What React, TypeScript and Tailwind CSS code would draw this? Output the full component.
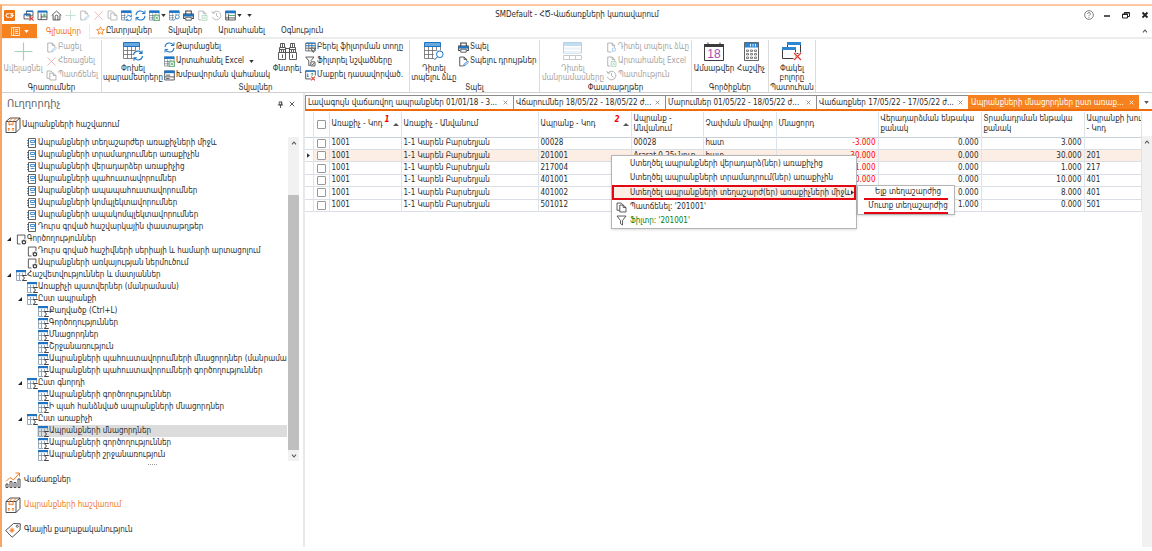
import { useState } from "react";
import type { ReactNode } from "react";
import clsx from "clsx";

type IconProps = { className?: string };

const BLUE = "#1d74c4";
const INK = "#3c3c3c";

function Svg({ className = "size-3", children }: { className?: string; children: ReactNode }) {
  return (
    <svg viewBox="0 0 16 16" fill="none" stroke={INK} strokeWidth="1.2" className={clsx("shrink-0", className)} aria-hidden="true">
      {children}
    </svg>
  );
}

function GridBase() {
  return (
    <>
      <path d="M.7 2v12.5h14V2M.7 8h14M.7 11.3h14M5.3 5v9.5M10 5v9.5" strokeWidth=".9" stroke="#5f6b76" />
      <path d="M.2.5h15v3.8H.2z" fill={BLUE} stroke="none" />
    </>
  );
}

function SumIcon({ className }: IconProps) {
  return (
    <svg viewBox="0 0 11 11" fill="none" stroke="#7d93a8" className={clsx("shrink-0", className)} aria-hidden="true">
      <path d="M.5 2v8.500H5M3.500 3v7M6.500 3v2M9.500 2v2.500M1 5.500h5" strokeWidth=".8" />
      <path d="M0 0h10v2.200H0z" fill={BLUE} stroke="none" />
      <path d="M10.500 6V5.500H6.300L8.500 8l-2.200 2.500h4.200V10" stroke="#2b2b2b" strokeWidth=".9" />
    </svg>
  );
}

function RefreshIcon({ className }: IconProps) {
  return (
    <Svg className={className}>
      <path d="M1.5 7.5a6.500 6.500 0 0 1 12.200-2.700M14.500 8.500a6.500 6.500 0 0 1-12.200 2.700" stroke={BLUE} strokeWidth="1.5" />
      <path d="M14.500.8v4.400h-4.400M1.500 15.200v-4.400h4.400" stroke={BLUE} strokeWidth="1.4" />
    </Svg>
  );
}

function GridRefreshIcon({ className }: IconProps) {
  return (
    <Svg className={className}>
      <GridBase />
      <path d="M6.5 6.5H16V16H6.500z" fill="#fff" stroke="none" />
      <path d="M7.500 11.500a4 4 0 0 1 7.200-2M15.500 12a4 4 0 0 1-7.200 2M15.300 7v2.800h-2.800M7.800 16.200v-2.600h2.800" stroke={BLUE} />
    </Svg>
  );
}

function GridExcelIcon({ className }: IconProps) {
  return (
    <Svg className={className}>
      <GridBase />
      <path d="M7.5 7.5h7.5v8H7.5z" fill="#fff" stroke="#3b9a55" />
      <path d="m9.4 9.4 3.8 4.2m0-4.2-3.8 4.2" stroke="#3b9a55" />
    </Svg>
  );
}

function GridSearchIcon({ className }: IconProps) {
  return (
    <Svg className={className}>
      <GridBase />
      <path d="M7 7h9v9H7z" fill="#fff" stroke="none" />
      <circle cx="12" cy="10" r="2.9" stroke={BLUE} />
      <path d="m10 12.2-3.2 3.3" stroke={BLUE} />
    </Svg>
  );
}

function GridLinesIcon({ className }: IconProps) {
  return (
    <Svg className={className}>
      <path d="M1 2h14v12.5H1zM5 6v8.5M1 11.5h14" />
      <path d="M.4.8h15.2v4H.4z" fill={BLUE} stroke="none" />
      <path d="M5 8h10" stroke="#3b9a55" />
    </Svg>
  );
}

function GroupPanelIcon({ className }: IconProps) {
  return (
    <Svg className={className}>
      <path d="M1 1.5h14v13H1zM1 10h14M3 7.5h6M3 12.5h5" />
      <path d="M.4.8h15.2v3.8H.4z" fill={BLUE} stroke="none" />
    </Svg>
  );
}

function CloseWindowIcon({ className }: IconProps) {
  return (
    <Svg className={className}>
      <path d="M5 1.5h9.5v7H5zM1.5 6h9v7h-9z" fill="#fff" />
      <path d="M5 2h9.5M1.5 6.5h9" stroke={BLUE} strokeWidth="2" />
      <path d="m9.5 9.5 6 6m0-6-6 6" stroke="#e33b32" strokeWidth="1.6" />
    </Svg>
  );
}

function LayoutIcon({ className }: IconProps) {
  return (
    <Svg className={className}>
      <path d="M1.5 2h13v12h-13zM6 5v9M6 10h8" />
      <path d="M1 .8h14v3H1z" fill={BLUE} stroke="none" />
      <path d="M8 7.4h5M10.5 5v5" stroke="#3b9a55" />
    </Svg>
  );
}

function HomeIcon({ className }: IconProps) {
  return (
    <Svg className={className}>
      <path d="m1 8 7-6.5L15 8M3 7v7.5h10V7M6 14.5V9.5a2 2 0 0 1 4 0v5" />
    </Svg>
  );
}

function PlusIcon({ className }: IconProps) {
  return (
    <Svg className={className}>
      <path d="M8 .5v15M.5 8h15" stroke="#3b9a63" strokeWidth="1" />
    </Svg>
  );
}

function CrossIcon({ className }: IconProps) {
  return (
    <Svg className={className}>
      <path d="m2 2 12 12M14 2 2 14" stroke="#e0473e" />
    </Svg>
  );
}

function EditDocIcon({ className }: IconProps) {
  return (
    <Svg className={className}>
      <path d="M7 14.5H2.5v-13H9L12.5 5v2M9 1.500V5h3.500" />
      <path d="m8 14.500 1-3 5-4 1.200 1.600-4.800 4.400z" stroke={BLUE} />
    </Svg>
  );
}

function CopyIcon({ className }: IconProps) {
  return (
    <Svg className={className}>
      <path d="M5 12H1.5V1.5h6L10 4" />
      <path d="M5.5 4.5h5L14.5 8v6.5h-9zM10.5 4.5V8h4" />
    </Svg>
  );
}

function SearchDocIcon({ className }: IconProps) {
  return (
    <Svg className={className}>
      <path d="M7 14.5H2.5v-13H9l3.5 3.5v3M9 1.5V5h3.5" />
      <circle cx="11.5" cy="11" r="2.5" stroke={BLUE} />
      <path d="m9.7 12.8-2.4 2.4" stroke={BLUE} />
    </Svg>
  );
}

function ExcelDocIcon({ className }: IconProps) {
  return (
    <Svg className={className}>
      <path d="M6 14.5H2.5v-13H9l3.5 3.5v2M9 1.5V5h3.5" />
      <path d="M7.5 8h7v7h-7zM9.4 9.6l3.2 3.6m0-3.6-3.2 3.6" stroke="#3b9a55" />
    </Svg>
  );
}

function HistoryIcon({ className }: IconProps) {
  return (
    <Svg className={className}>
      <path d="M3 4.2A6.3 6.3 0 1 1 2 10M1 1.5l1.8 3.4L6.4 4M8 4.5V8.4l3 2" />
    </Svg>
  );
}

function PrinterIcon({ className }: IconProps) {
  return (
    <Svg className={className}>
      <path d="M4 6V1.5h8V6M3 12.5H1V6h14v6.5h-2" strokeWidth="1.5" />
      <path d="M1 6h14v3.5H1z" fill={BLUE} stroke="none" />
      <path d="M4 10.5h8v4.3H4z" fill="#fff" />
    </Svg>
  );
}

function BinocularsIcon({ className }: IconProps) {
  return (
    <svg viewBox="0 0 19 19" fill="none" stroke="#4a4a4a" strokeWidth=".9" className={clsx("shrink-0", className)} aria-hidden="true">
      <path d="M.5 10.5h7v7h-7zM11.5 10.5h7v7h-7zM1.5 10.5v-5h6v5M11.5 10.5v-5h6v5M7.5 6.5h4v4h-4zM2.5 5.5v-4h4v4M12.5 5.5v-4h4v4" />
      <path d="M4.5 1.5v4M14.5 1.5v4M1.5 7.5h6M11.5 7.5h6M4.5 12.5V16M14.5 12.5V16M3.5 8v2M5.5 8v2M13.5 8v2M15.5 8v2" />
    </svg>
  );
}

function FilterRowIcon({ className }: IconProps) {
  return (
    <Svg className={className}>
      <path d="M1 2h14v11H1zM1 9h14M5.5 2v11M10 2v11" strokeWidth="1" />
      <path d="M1 1.5h14M1 5.5h14" stroke={BLUE} strokeWidth="1.6" />
      <path d="M8 9h7.5l-2.7 3.2V15l-2-1v-1.8z" fill="#fff" />
    </Svg>
  );
}

function FilterMarkedIcon({ className }: IconProps) {
  return (
    <Svg className={className}>
      <path d="M1 1.5h12L8.5 7M1 1.5 5.5 7v7l2-1" />
      <path d="M8.5 8.5h6v6h-6zM10 11.5l1.2 1.3 2-2.6" />
    </Svg>
  );
}

function ClearSortIcon({ className }: IconProps) {
  return (
    <Svg className={className}>
      <path d="M9 13H1V1.5h14V8" />
      <path d="M.5 1.5h15" stroke={BLUE} strokeWidth="2" />
      <path d="M4 5v5M2.5 8.5 4 10l1.500-1.500" stroke={BLUE} />
      <path d="M10.500 4.500v4M8.800 6.200l1.700-1.700 1.700 1.700" stroke="#3b9a55" />
      <path d="m9 9.500 5.500 5.500m0-5.500L9 15" stroke="#e33b32" strokeWidth="1.6" />
    </Svg>
  );
}

function FunnelIcon({ className }: IconProps) {
  return (
    <Svg className={className}>
      <path d="M1.5 1.5h13L9.5 8v6.5l-3-2V8z" />
    </Svg>
  );
}

function DocListIcon({ className }: IconProps) {
  return (
    <svg viewBox="0 0 10 10" fill="none" stroke={INK} className={clsx("shrink-0", className)} aria-hidden="true">
      <path d="M1.5.5h7v9h-7z" strokeWidth=".8" />
      <path d="M0 2.5h2M0 5h2M0 7.5h2" strokeWidth=".7" />
      <path d="M3.5 2.5h4v2h-4zM3.5 6.500h4" stroke="#2c86d2" strokeWidth=".9" />
    </svg>
  );
}

function DocGearIcon({ className }: IconProps) {
  return (
    <Svg className={className}>
      <path d="M6.5 14.5H2v-13h11v6" />
      <circle cx="11.5" cy="12" r="2.5" strokeWidth="1.8" />
      <path d="M11.5 8v1.5M8 10l1.3.7M15 10l-1.3.7" />
    </Svg>
  );
}

function BoxIcon({ className }: IconProps) {
  return (
    <Svg className={className}>
      <path d="M1 4.5h10v11H1zM1 4.5 5 1h10l-4 3.5M15 1v10.5l-4 4" strokeWidth=".9" />
      <path d="M4 8V4.5L7.5 1M8 8V4.5L11.5 1M4 8l2-1 2 1M3.8 14v-3m-1 1.200 1-1.200 1 1.200M8 14v-3m-1 1.200L8 11l1 1.200" stroke="#f47b20" strokeWidth="1" />
    </Svg>
  );
}

function SalesIcon({ className }: IconProps) {
  return (
    <Svg className={className}>
      <path d="M1 12h2v3.5H1zM5 9.5h2v6H5zM9 10.5h2v5H9zM13 7h2v8.5h-2z" strokeWidth=".9" />
      <path d="m1 9.5 4-4 3.5 2.5 6-7M10.5 1h4v3.5" stroke="#f47b20" strokeWidth="1" />
    </Svg>
  );
}

function PriceTagIcon({ className }: IconProps) {
  return (
    <Svg className={className}>
      <path d="M.7 8.5 8.5 1.5l6.8.3-.3 6.2-7.800 7.300z" strokeWidth=".9" />
      <circle cx="12.3" cy="4.3" r="1" strokeWidth=".8" />
      <path d="M7 5.5V11M4.5 8.300h5M5.300 6.500l3.400 3.600M8.700 6.500l-3.400 3.600" stroke="#f47b20" strokeWidth=".9" />
    </Svg>
  );
}

function BigTable({ kind }: { kind: "refresh" | "search" | "detail" }) {
  return (
    <svg viewBox="0 0 20 19" className="h-[19px] w-5" fill="none" stroke={INK} aria-hidden="true">
      {kind === "detail" ? (
        <>
          <path d="M.5.5h18V11H.5z" stroke="#5b9bd0" />
          <path d="M1 1h17v3H1z" fill="#7cb4e0" stroke="none" />
          <path d="M1 5.5h17v2H1zM1 9h17v2H1z" fill="#cfe3f3" stroke="none" />
          <path d="M.5 13.5h18v4H.5zM6.5 13.5v4M12.5 13.5v4" stroke="#888" />
        </>
      ) : (
        <>
          <path d="M.5 1v15.5h16V1M.5 8.5h16M.5 12.5h16M4.5 5v11.5M8.5 5v11.5M12.5 5v11.5" strokeWidth=".8" stroke="#666" />
          <path d="M.5.5h16v4H.5z" fill="#68a8dc" stroke={BLUE} />
          <circle cx="15" cy="13.5" r="5.5" fill="#fff" stroke="none" />
        </>
      )}
      {kind === "refresh" && <path d="M10.5 13a4.300 4.300 0 0 1 8-1.800M19.500 14a4.300 4.300 0 0 1-8 1.800M19 8.500v2.900h-2.900M11 18.700v-2.900h2.900" stroke={BLUE} strokeWidth="1.1" />}
      {kind === "search" && (
        <>
          <circle cx="15.8" cy="12.3" r="3.3" stroke={BLUE} />
          <path d="m13.5 14.7-3 3.3" stroke={BLUE} />
        </>
      )}
    </svg>
  );
}

function CalendarIcon() {
  return (
    <svg viewBox="0 0 20 19" className="h-[19px] w-5" fill="none" aria-hidden="true">
      <path d="M.5 2.5h19v16H.5z" stroke={INK} />
      <path d="M0 2h20v3H0z" fill={INK} />
      <path d="M4 .5v2M16 .5v2" stroke={INK} />
      <text x="10" y="16" fontSize="12" textAnchor="middle" fill="#a54bb5" fontFamily="Liberation Sans, sans-serif">18</text>
    </svg>
  );
}

function CalculatorIcon() {
  return (
    <svg viewBox="0 0 15 19" className="h-[19px] w-[15px]" fill="none" stroke={INK} aria-hidden="true">
      <path d="M.5.5h14v18H.5z" strokeWidth=".8" />
      <path d="M1 1h13v4.5H1z" fill="#2c86d2" stroke="none" />
      <path d="M6.5 2v2.5M9 2v2.5M11.5 2v2.5" stroke="#fff" strokeWidth=".9" />
      <path d="M2.5 8h2v1.5h-2zM6.5 8h2v1.5h-2zM10.5 8h2v1.5h-2zM2.5 11.5h2V13h-2zM6.5 11.5h2V13h-2zM10.5 11.5h2V13h-2zM2.5 15h2v1.5h-2zM6.5 15h2v1.5h-2zM10.5 15h2v1.5h-2z" strokeWidth=".6" />
    </svg>
  );
}

function CloseAllIcon() {
  return (
    <svg viewBox="0 0 20 19" className="h-[19px] w-5" fill="none" stroke={INK} aria-hidden="true">
      <path d="M5.5.5h13v11h-13z" fill="#fff" />
      <path d="M5 0h14v3H5z" fill="#2c86d2" stroke="none" />
      <path d="M.5 5.5h13v11H.5z" fill="#fff" />
      <path d="M0 5h14v3H0z" fill="#2c86d2" stroke="none" />
      <path d="m12 11 7 7m0-7-7 7" stroke="#fff" strokeWidth="3" />
      <path d="m12 11 7 7m0-7-7 7" stroke="#e33b32" strokeWidth="1.2" />
    </svg>
  );
}

function Caret({ className = "text-[#333]" }: IconProps) {
  return (
    <svg viewBox="0 0 6 4" className={clsx("h-[3px] w-[5px] shrink-0", className)} fill="currentColor" aria-hidden="true">
      <path d="M0 0h6L3 4z" />
    </svg>
  );
}

function Chevron({ down = false }: { down?: boolean }) {
  return (
    <svg viewBox="0 0 8 6" className="h-1 w-[6px]" fill="none" stroke="#555" strokeWidth="1.6" aria-hidden="true">
      <path d={down ? "m1 1 3 3.5L7 1" : "m1 5 3-3.5L7 5"} />
    </svg>
  );
}

type QuickItem = { label: string; icon: (p: IconProps) => ReactNode; off?: boolean; caret?: boolean };

const quickItems: QuickItem[] = [
  { label: "Փակել", icon: CloseWindowIcon },
  { label: "Պատուհան", icon: LayoutIcon },
  { label: "Գլխավոր", icon: HomeIcon },
  { label: "Ավելացնել", icon: PlusIcon, off: true },
  { label: "Բացել", icon: EditDocIcon, off: true },
  { label: "Հեռացնել", icon: CrossIcon, off: true },
  { label: "Պատճենել", icon: CopyIcon, off: true },
  { label: "Փոխել պարամետրերը", icon: GridRefreshIcon },
  { label: "Թարմացնել", icon: RefreshIcon },
  { label: "Արտահանել Excel", icon: GridExcelIcon, caret: true },
  { label: "Դիտել տպելու ձևը", icon: GridSearchIcon },
  { label: "Տպել", icon: PrinterIcon },
  { label: "Արտահանել փաստաթուղթը", icon: ExcelDocIcon, off: true },
  { label: "Պատմություն", icon: HistoryIcon, off: true },
  { label: "Աղյուսակ", icon: GridLinesIcon, caret: true },
];

function TitleBar() {
  return (
    <header className="relative flex h-[18px] items-center pl-[2px]">
      <svg viewBox="0 0 12 12" className="mr-2 size-[11px]" aria-hidden="true">
        <rect width="12" height="12" rx="1" fill="#ee7412" />
        <path d="M5.5 4h-2L2 6l1.5 2h2M6 4h3.5L8 6h2L8.5 8H6" fill="none" stroke="#fff" strokeWidth="1.1" />
      </svg>
      <div className="flex items-center gap-[3px]">
        {quickItems.map(({ label, icon: Icon, off, caret }) => (
          <button key={label} aria-label={label} disabled={off} className={clsx("flex items-center gap-px", off && "opacity-40")}>
            <Icon className="size-[11px]" />
            {caret && <Caret />}
          </button>
        ))}
        <button aria-label="Ավելին" className="ml-[2px]"><Caret /></button>
      </div>
      <h1 className="pointer-events-none absolute inset-x-0 text-center">SMDefault - ՀԾ-Վաճառքների կառավարում</h1>
      <div className="relative ml-auto flex items-center gap-[9px] pr-[3px] text-[#222]">
        <button aria-label="Օգնություն">
          <svg viewBox="0 0 16 16" className="size-[10px]" fill="none" stroke="#555" strokeWidth="1.2" aria-hidden="true">
            <circle cx="8" cy="8" r="7" />
            <path d="M5.8 6.2a2.200 2.200 0 1 1 3.200 2Q8 8.800 8 10M8 11.300v1.400" />
          </svg>
        </button>
        <button aria-label="Ծալել">
          <svg viewBox="0 0 8 8" className="size-2" stroke="currentColor" strokeWidth="1.5" aria-hidden="true"><path d="M1 5h6" /></svg>
        </button>
        <button aria-label="Վերականգնել" className="ml-[2px]">
          <svg viewBox="0 0 8 8" className="size-2" fill="none" stroke="currentColor" aria-hidden="true"><path d="M2.5 3V1.5h5v4H6M.5 3h5v4h-5zM2 2h5M1 3.5h4.5" /></svg>
        </button>
        <button aria-label="Փակել ծրագիրը" className="ml-[2px]">
          <svg viewBox="0 0 8 8" className="size-2" stroke="currentColor" strokeWidth="1.8" aria-hidden="true"><path d="m1.5 1.5 5 5m0-5-5 5" /></svg>
        </button>
      </div>
    </header>
  );
}

function RibbonTabs() {
  return (
    <nav className="flex h-[15px] items-stretch border-b-2 border-[#ececec]">
      <button aria-label="Ֆայլ" className="-mb-px flex w-[35px] items-center justify-center gap-1 bg-[#f5821f] text-white">
        <svg viewBox="0 0 10 10" className="size-[9px]" fill="none" stroke="currentColor" aria-hidden="true">
          <path d="M.5.5h9v9h-9zM3 .5v9M4.5 3H8M4.5 5H8M4.5 7H8" strokeWidth=".9" />
        </svg>
        <Caret className="text-white" />
      </button>
      <button className="-mb-[2px] ml-px w-[52px] border-r border-[#ececec] bg-white text-center text-[#ee6f10]">Գլխավոր</button>
      <button className="ml-[6px] flex items-center gap-px">
        <svg viewBox="0 0 12 12" className="size-[9px]" fill="#fff3e3" stroke="#f07a1a" aria-hidden="true">
          <path d="m6 1 1.5 3.4 3.7.4-2.8 2.5.8 3.7L6 9.1 2.8 11l.8-3.7L.8 4.800l3.700-.4z" />
        </svg>
        Ընտրյալներ
      </button>
      <button className="ml-4">Տվյալներ</button>
      <button className="ml-4">Արտահանել</button>
      <button className="ml-4">Օգնություն</button>
      <button aria-label="Ծալել ժապավենը" className="ml-auto mr-1"><Chevron /></button>
    </nav>
  );
}

function RibbonGroup({ title, className, children }: { title: string; className: string; children: ReactNode }) {
  return (
    <section className={clsx("flex shrink-0 flex-col border-r border-[#dcdcdc]", className)}>
      <div className="flex h-[43px]">{children}</div>
      <h2 className="text-center leading-[9px]">{title}</h2>
    </section>
  );
}

function BigButton({ lines, icon, off, className }: { lines: string[]; icon: ReactNode; off?: boolean; className?: string }) {
  return (
    <button disabled={off} className={clsx("flex shrink-0 flex-col items-center pt-[2px]", off && "opacity-45", className)}>
      {icon}
      <span className="mt-[3px] flex flex-col items-center whitespace-nowrap leading-[9px]">
        {lines.map((line) => <span key={line}>{line}</span>)}
      </span>
    </button>
  );
}

function SmallButton({ label, icon: Icon, off, caret }: QuickItem) {
  return (
    <button disabled={off} className={clsx("flex h-[14px] items-center gap-px whitespace-nowrap", off && "opacity-45")}>
      <Icon className="size-[11px]" />
      {label}
      {caret && <Caret className="ml-1 text-[#333]" />}
    </button>
  );
}

function Ribbon() {
  return (
    <div className="flex h-[54px] border-b border-[#d0d0d0] pt-px">
      <RibbonGroup title="Գրառումներ" className="w-[100px]">
        <BigButton lines={["Ավելացնել"]} off icon={<PlusIcon className="size-[19px]" />} className="w-[42px]" />
        <div className="ml-[2px] flex flex-col">
          <SmallButton label="Բացել" icon={EditDocIcon} off />
          <SmallButton label="Հեռացնել" icon={CrossIcon} off />
          <SmallButton label="Պատճենել" icon={CopyIcon} off />
        </div>
      </RibbonGroup>
      <RibbonGroup title="Տվյալներ" className="w-[308px]">
        <BigButton lines={["Փոխել", "պարամետրերը"]} icon={<BigTable kind="refresh" />} className="w-[62px]" />
        <div className="flex w-[107px] flex-col">
          <SmallButton label="Թարմացնել" icon={RefreshIcon} />
          <SmallButton label="Արտահանել Excel" icon={GridExcelIcon} caret />
          <SmallButton label="Խմբավորման վահանակ" icon={GroupPanelIcon} />
        </div>
        <BigButton lines={["Փնտրել"]} icon={<BinocularsIcon className="size-[19px]" />} className="w-[32px]" />
        <div className="ml-[2px] flex flex-col">
          <SmallButton label="Բերել ֆիլտրման տողը" icon={FilterRowIcon} />
          <SmallButton label="Ֆիլտրել նշվածները" icon={FilterMarkedIcon} />
          <SmallButton label="Մաքրել դասավորված." icon={ClearSortIcon} />
        </div>
      </RibbonGroup>
      <RibbonGroup title="Տպել" className="w-[130px]">
        <BigButton lines={["Դիտել", "տպելու ձևը"]} icon={<BigTable kind="search" />} className="w-[48px]" />
        <div className="flex flex-col">
          <SmallButton label="Տպել" icon={PrinterIcon} />
          <SmallButton label="Տպելու դրույթներ" icon={EditDocIcon} />
        </div>
      </RibbonGroup>
      <RibbonGroup title="Փաստաթղթեր" className="w-[152px]">
        <BigButton lines={["Դիտել", "մանրամասները"]} off icon={<BigTable kind="detail" />} className="w-[66px]" />
        <div className="flex flex-col">
          <SmallButton label="Դիտել տպելու ձևը" icon={SearchDocIcon} off />
          <SmallButton label="Արտահանել Excel" icon={ExcelDocIcon} off />
          <SmallButton label="Պատմություն" icon={HistoryIcon} off />
        </div>
      </RibbonGroup>
      <RibbonGroup title="Գործիքներ" className="w-[77px]">
        <BigButton lines={["Ամսաթվեր"]} icon={<CalendarIcon />} className="w-[44px]" />
        <BigButton lines={["Հաշվիչ"]} icon={<CalculatorIcon />} className="w-[30px]" />
      </RibbonGroup>
      <RibbonGroup title="Պատուհան" className="w-[47px]">
        <BigButton lines={["Փակել", "բոլորը"]} icon={<CloseAllIcon />} className="w-[46px]" />
      </RibbonGroup>
    </div>
  );
}

type TreeItem = { label: string; depth: 0 | 1 | 2; kind: "doc" | "gear" | "sum"; open?: boolean };

const treeItems: TreeItem[] = [
  { label: "Ապրանքների տեղաշարժեր առաքիչների միջև", depth: 1, kind: "doc" },
  { label: "Ապրանքների տրամադրումներ առաքիչին", depth: 1, kind: "doc" },
  { label: "Ապրանքների վերադարձեր առաքիչից", depth: 1, kind: "doc" },
  { label: "Ապրանքների պահուստավորումներ", depth: 1, kind: "doc" },
  { label: "Ապրանքների ապապահուստավորումներ", depth: 1, kind: "doc" },
  { label: "Ապրանքների կոմպլեկտավորումներ", depth: 1, kind: "doc" },
  { label: "Ապրանքների ապակոմպլեկտավորումներ", depth: 1, kind: "doc" },
  { label: "Դուրս գրված հաշվարկային փաստաթղթեր", depth: 1, kind: "doc" },
  { label: "Գործողություններ", depth: 0, kind: "gear", open: true },
  { label: "Դուրս գրված հաշիվների սերիայի և համարի արտացոլում", depth: 1, kind: "gear" },
  { label: "Ապրանքների առկայության ներմուծում", depth: 1, kind: "gear" },
  { label: "Հաշվետվություններ և մատյաններ", depth: 0, kind: "sum", open: true },
  { label: "Առաքիչի պատվերներ (մանրամասն)", depth: 1, kind: "sum" },
  { label: "Ըստ ապրանքի", depth: 1, kind: "sum", open: true },
  { label: "Քաղվածք (Ctrl+L)", depth: 2, kind: "sum" },
  { label: "Գործողություններ", depth: 2, kind: "sum" },
  { label: "Մնացորդներ", depth: 2, kind: "sum" },
  { label: "Շրջանառություն", depth: 2, kind: "sum" },
  { label: "Ապրանքների պահուստավորումների մնացորդներ (մանրամասն)", depth: 2, kind: "sum" },
  { label: "Ապրանքների պահուստավորումների գործողություններ", depth: 2, kind: "sum" },
  { label: "Ըստ գնորդի", depth: 1, kind: "sum", open: true },
  { label: "Ապրանքների գործողություններ", depth: 2, kind: "sum" },
  { label: "Ի պահ հանձնված ապրանքների մնացորդներ", depth: 2, kind: "sum" },
  { label: "Ըստ առաքիչի", depth: 1, kind: "sum", open: true },
  { label: "Ապրանքների մնացորդներ", depth: 2, kind: "sum" },
  { label: "Ապրանքների գործողություններ", depth: 2, kind: "sum" },
  { label: "Ապրանքների շրջանառություն", depth: 2, kind: "sum" },
];

const treeIcons = { doc: DocListIcon, gear: DocGearIcon, sum: SumIcon };
const treeIconSizes = { doc: "size-[10px]", gear: "size-[11px]", sum: "size-[11px]" };
const indents = ["pl-1", "pl-[15px]", "pl-[26px]"];

function Tree() {
  const [selected, setSelected] = useState(24);
  return (
    <div className="mt-[2px] flex h-[324px] pr-1">
      <ul className="min-w-0 flex-1 overflow-hidden">
        {treeItems.map((item, i) => {
          const Icon = treeIcons[item.kind];
          return (
            <li key={i} className={clsx("flex", indents[item.depth])}>
              <span className="flex w-[9px] shrink-0 items-center pl-px">
                {item.open && <svg viewBox="0 0 5 5" className="size-1" fill="#222" aria-hidden="true"><path d="M5 0v5H0z" /></svg>}
              </span>
              <button
                onClick={() => setSelected(i)}
                className={clsx("flex h-3 min-w-0 flex-1 items-center overflow-hidden whitespace-nowrap leading-3", selected === i && "bg-[#dcdcdc]")}
              >
                <span className="flex w-3 shrink-0 justify-center"><Icon className={treeIconSizes[item.kind]} /></span>
                {item.label}
              </button>
            </li>
          );
        })}
      </ul>
      <div className="ml-px flex w-[11px] flex-col items-center bg-[#f1f1f1]">
        <span className="flex h-3 items-center"><Chevron /></span>
        <span className="mt-[46px] w-full flex-1 bg-[#bfbfbf]" />
        <span className="flex h-[11px] items-center"><Chevron down /></span>
      </div>
    </div>
  );
}

const modules = [
  { label: "Վաճառքներ", icon: SalesIcon },
  { label: "Ապրանքների հաշվառում", icon: BoxIcon, active: true },
  { label: "Գնային քաղաքականություն", icon: PriceTagIcon },
];

function Sidebar() {
  return (
    <aside className="flex w-[301px] shrink-0 flex-col">
      <div className="flex h-[22px] items-center pl-[5px] pr-1">
        <h2 className="flex-1 text-[11px] text-[#666]">Ուղղորդիչ</h2>
        <button aria-label="Ամրացնել" className="mr-[5px]">
          <svg viewBox="0 0 8 8" className="size-[7px]" fill="none" stroke="#444" aria-hidden="true"><path d="M2.5 1h3v3.5h-3zM1 4.5h6M4 4.5V8M5 1v3" /></svg>
        </button>
        <button aria-label="Փակել ուղղորդիչը" className="mr-[4px]">
          <svg viewBox="0 0 8 8" className="size-[6px]" stroke="#444" strokeWidth="1.2" aria-hidden="true"><path d="m1 1 6 6m0-6-6 6" /></svg>
        </button>
      </div>
      <h3 className="flex h-5 items-center gap-px pl-[3px]">
        <BoxIcon className="size-4" />
        Ապրանքների հաշվառում
      </h3>
      <Tree />
      <div className="flex h-[6px] items-center justify-center gap-px">
        {[0, 1, 2, 3, 4].map((n) => <span key={n} className="size-px bg-[#999]" />)}
      </div>
      <ul>
        {modules.map(({ label, icon: Icon, active }) => (
          <li key={label}>
            <button className={clsx("flex h-[25px] items-center gap-[3px] pl-[3px]", active && "text-[#f07a1a]")}>
              <Icon className="size-4" />
              {label}
            </button>
          </li>
        ))}
      </ul>
    </aside>
  );
}

const docTabs = [
  { label: "Լավագույն վաճառվող ապրանքներ 01/01/18 - 3...", width: "basis-[208px]" },
  { label: "Վճարումներ 18/05/22 - 18/05/22 ժ...", width: "basis-[152px]" },
  { label: "Մարումներ 01/05/22 - 18/05/22 ժ...", width: "basis-[151px]" },
  { label: "Վաճառքներ 17/05/22 - 17/05/22 ժ...", width: "basis-[152px]" },
  { label: "Ապրանքների մնացորդներ ըստ առաք...", width: "basis-[171px]", active: true },
];

function DocTabs() {
  return (
    <div className="box-content flex h-[14px] border-b-2 border-[#ee6a0a]">
      {docTabs.map(({ label, width, active }) => (
        <div
          key={label}
          className={clsx("flex min-w-0 items-center justify-between border-l border-t pl-[2px] pr-[5px]", width, active ? "border-[#f5821f] bg-[#f5821f] text-white" : "border-[#8c8c8c]")}
        >
          <button className="min-w-0 overflow-hidden whitespace-nowrap">{label}</button>
          <button aria-label={`Փակել ${label}`} className={active ? "text-white" : "text-[#777]"}>
            <svg viewBox="0 0 8 8" className="size-[5px]" stroke="currentColor" strokeWidth="1.2" aria-hidden="true"><path d="m1 1 6 6m0-6-6 6" /></svg>
          </button>
        </div>
      ))}
      <button aria-label="Բոլոր պատուհանները" className="ml-auto px-[3px]"><Caret className="text-[#555]" /></button>
    </div>
  );
}

const rows = [
  ["1001", "1-1 Կարեն Բարսեղյան", "00028", "00028", "հատ", "-3.000", "0.000", "3.000", ""],
  ["1001", "1-1 Կարեն Բարսեղյան", "201001", "Ararat 0.25լ նուռ", "հատ", "-30.000", "0.000", "30.000", "201"],
  ["1001", "1-1 Կարեն Բարսեղյան", "217004", "", "", "-1.000", "0.000", "1.000", "217"],
  ["1001", "1-1 Կարեն Բարսեղյան", "401001", "", "", "-10.000", "0.000", "10.000", "401"],
  ["1001", "1-1 Կարեն Բարսեղյան", "401002", "", "", "", "0.000", "8.000", "401"],
  ["1001", "1-1 Կարեն Բարսեղյան", "501012", "", "", "", "1.000", "0.000", "501"],
];

const columns = [
  { lines: ["Առաքիչ - Կոդ"], width: "w-[72px]", sort: 1 },
  { lines: ["Առաքիչ - Անվանում"], width: "w-[137px]" },
  { lines: ["Ապրանք - Կոդ"], width: "w-[93px]", sort: 2 },
  { lines: ["Ապրանք -", "Անվանում"], width: "w-[72px]" },
  { lines: ["Չափման միավոր"], width: "w-[73px]" },
  { lines: ["Մնացորդ"], width: "w-[102px]" },
  { lines: ["Վերադարձման ենթակա", "քանակ"], width: "w-[103px]" },
  { lines: ["Տրամադրման ենթակա", "քանակ"], width: "w-[103px]" },
  { lines: ["Ապրանքի խու", "- Կոդ"], width: "" },
];

const checkbox = "block size-[9px] appearance-none rounded-[1px] border border-[#999] bg-white checked:bg-[#f5821f]";

function StockTable() {
  return (
    <div className="mt-px flex flex-1 items-stretch">
      <div className="min-w-0 flex-1">
        <table className="h-[100px] w-full table-fixed border-collapse text-left">
          <thead>
            <tr className="h-[25px] border-b border-[#c9d0d8]">
              <th className="w-2 border-r border-[#dde3ea]" aria-label="Ընթացիկ" />
              <th className="w-4 border-r border-[#dde3ea] pl-[3px]"><input type="checkbox" aria-label="Նշել բոլորը" className={checkbox} /></th>
              {columns.map(({ lines, width, sort }) => (
                <th key={lines.join(" ")} className={clsx("overflow-hidden whitespace-nowrap border-r border-[#dde3ea] pl-[2px] font-normal leading-[10px]", width)}>
                  <span className="flex items-center justify-between pr-[2px]">
                    <span>{lines.map((line) => <span key={line} className="block">{line}</span>)}</span>
                    {sort && (
                      <span className="flex items-center gap-[3px]">
                        <b className="pb-2 italic text-[#ff0000]">{sort}</b>
                        <svg viewBox="0 0 6 3" className="h-[3px] w-[6px]" fill="#555" aria-hidden="true"><path d="M3 0l3 3H0z" /></svg>
                      </span>
                    )}
                  </span>
                </th>
              ))}
            </tr>
          </thead>
          <tbody>
            {rows.map((row, r) => (
              <tr key={r} className={clsx("h-3 border-b border-[#dadfe5]", r === 1 && "bg-[#fceee4]")}>
                <td className="border-r border-[#dde3ea] bg-white">
                  {r === 1 && <svg viewBox="0 0 4 6" className="ml-[2px] h-[5px] w-[3px]" fill="#333" aria-hidden="true"><path d="M0 0l4 3-4 3z" /></svg>}
                </td>
                <td className="border-r border-[#dde3ea] pl-[3px]"><input type="checkbox" aria-label={`Նշել ${row[2]}`} className={checkbox} /></td>
                {row.map((cell, c) => (
                  <td
                    key={c}
                    className={clsx(
                      "overflow-hidden whitespace-nowrap border-r border-[#dde3ea] px-[2px] leading-[10px]",
                      c >= 5 && c <= 7 && "text-right",
                      c === 5 && "text-[#ff0000]"
                    )}
                  >
                    {cell}
                  </td>
                ))}
              </tr>
            ))}
          </tbody>
        </table>
      </div>
      <div className="mt-6 flex w-[10px] justify-center bg-[#f1f1f1] pt-1"><Chevron /></div>
    </div>
  );
}

function ContextMenu() {
  return (
    <div className="absolute left-[306px] top-[62px] flex items-start">
      <ul className="w-[246px] border border-[#b5b5b5] bg-white py-px shadow-sm">
        <li><button className="flex h-[14px] w-full items-center pl-[18px]">Ստեղծել ապրանքների վերադարձ(ներ) առաքիչից</button></li>
        <li><button className="flex h-[14px] w-full items-center pl-[18px]">Ստեղծել ապրանքների տրամադրում(ներ) առաքիչին</button></li>
        <li>
          <button className="flex h-[15px] w-full items-center justify-between whitespace-nowrap border-2 border-[#e30613] bg-[#fceee4] pl-4 leading-[10px]">
            Ստեղծել ապրանքների տեղաշարժ(եր) առաքիչների միջև
            <svg viewBox="0 0 4 6" className="h-[5px] w-[3px] shrink-0" fill="#333" aria-hidden="true"><path d="M0 0l4 3-4 3z" /></svg>
          </button>
        </li>
        <li><button className="flex h-[14px] w-full items-center gap-[3px] pl-1"><CopyIcon className="size-[11px]" />Պատճենել: '201001'</button></li>
        <li><button className="flex h-[13px] w-full items-center gap-[3px] pl-1 text-[#0a800a]"><FunnelIcon className="size-[11px]" />Ֆիլտր: '201001'</button></li>
      </ul>
      <ul className="mt-[30px] w-[98px] border border-[#b5b5b5] bg-white px-[6px] shadow-sm">
        <li><button className="h-[14px] w-full whitespace-nowrap border-b-2 border-[#e30613] pl-1 text-center leading-3">Ելք տեղաշարժից</button></li>
        <li><button className="h-[14px] w-full whitespace-nowrap border-b-2 border-[#e30613] pl-1 text-center leading-3">Մուտք տեղաշարժից</button></li>
      </ul>
    </div>
  );
}

export default function App() {
  return (
    <div className="h-screen bg-white py-1 font-['DejaVu_Sans_Condensed','DejaVu_Sans',sans-serif] text-[8px] leading-3 text-[#2b2b2b]">
      <div className="flex h-full flex-col border-l-2 border-t-2 border-l-[#f9a562] border-t-[#fdc8a0]">
        <TitleBar />
        <RibbonTabs />
        <Ribbon />
        <div className="flex min-h-0 flex-1">
          <Sidebar />
          <main className="relative flex min-w-0 flex-1 flex-col border-l-2 border-[#e8e8e8] pt-[2px]">
            <DocTabs />
            <StockTable />
            <ContextMenu />
          </main>
        </div>
      </div>
    </div>
  );
}
